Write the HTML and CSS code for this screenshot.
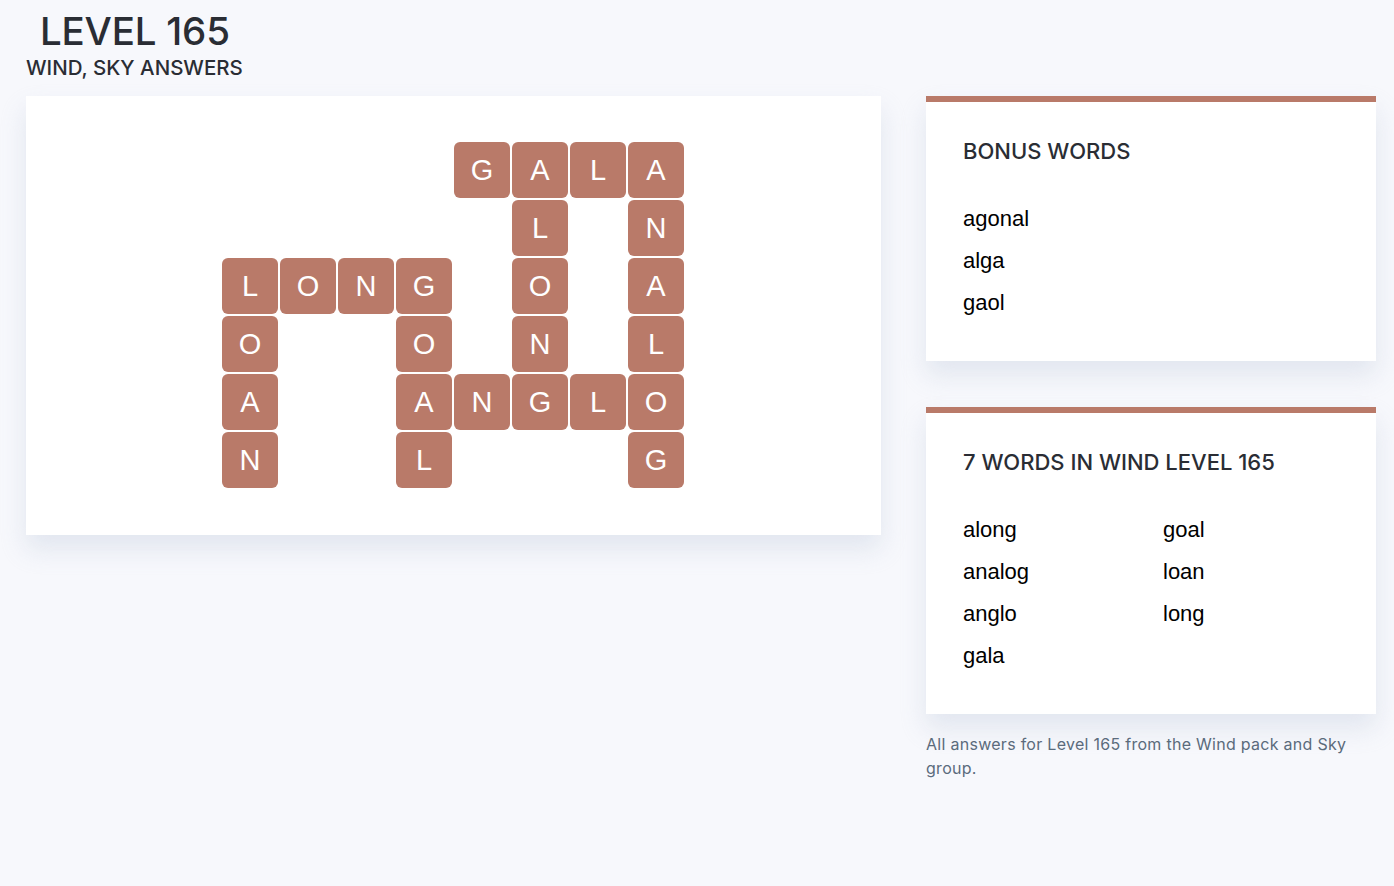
FILE: index.html
```html
<!DOCTYPE html>
<html lang="en">
<head>
<meta charset="utf-8">
<title>Level 165 - Wind, Sky Answers</title>
<link rel="stylesheet" href="styles.css">
</head>
<body>
<header class="page-head">
  <h1 class="title">LEVEL 165</h1>
  <h2 class="subtitle">WIND, SKY ANSWERS</h2>
</header>
<main class="layout">
  <section class="board-card">
    <div class="board">
      <span class="cell"></span><span class="cell"></span><span class="cell"></span><span class="cell"></span><span class="tile">G</span><span class="tile">A</span><span class="tile">L</span><span class="tile">A</span>
      <span class="cell"></span><span class="cell"></span><span class="cell"></span><span class="cell"></span><span class="cell"></span><span class="tile">L</span><span class="cell"></span><span class="tile">N</span>
      <span class="tile">L</span><span class="tile">O</span><span class="tile">N</span><span class="tile">G</span><span class="cell"></span><span class="tile">O</span><span class="cell"></span><span class="tile">A</span>
      <span class="tile">O</span><span class="cell"></span><span class="cell"></span><span class="tile">O</span><span class="cell"></span><span class="tile">N</span><span class="cell"></span><span class="tile">L</span>
      <span class="tile">A</span><span class="cell"></span><span class="cell"></span><span class="tile">A</span><span class="tile">N</span><span class="tile">G</span><span class="tile">L</span><span class="tile">O</span>
      <span class="tile">N</span><span class="cell"></span><span class="cell"></span><span class="tile">L</span><span class="cell"></span><span class="cell"></span><span class="cell"></span><span class="tile">G</span>
    </div>
  </section>
  <aside class="side">
    <section class="word-card">
      <h3 class="card-title">BONUS WORDS</h3>
      <ul class="word-list">
        <li>agonal</li>
        <li>alga</li>
        <li>gaol</li>
      </ul>
    </section>
    <section class="word-card">
      <h3 class="card-title">7 WORDS IN WIND LEVEL 165</h3>
      <ul class="word-list two-col">
        <li>along</li>
        <li>analog</li>
        <li>anglo</li>
        <li>gala</li>
        <li>goal</li>
        <li>loan</li>
        <li>long</li>
      </ul>
    </section>
    <p class="note">All answers for Level 165 from the Wind pack and Sky group.</p>
  </aside>
</main>
</body>
</html>
```
FILE: styles.css
```css
* { box-sizing: border-box; }

body {
  margin: 0;
  background: #f7f8fc;
  font-family: "Inter", "Liberation Sans", sans-serif;
  color: #2a2d34;
}

.page-head {
  padding: 9px 0 0 26px;
}

.title {
  margin: 0 0 0 14px;
  font-size: 38.5px;
  line-height: 44px;
  font-weight: 500;
  letter-spacing: -0.2px;
}

.subtitle {
  margin: 2px 0 0;
  font-size: 20.5px;
  line-height: 26px;
  font-weight: 500;
}

.layout {
  display: grid;
  grid-template-columns: 855px 450px;
  gap: 45px;
  padding: 15px 0 0 26px;
  align-items: start;
}

.board-card {
  background: #fff;
  height: 439px;
  padding: 46px 0 0 196px;
  box-shadow: 0 14px 24px rgba(200, 208, 224, 0.45);
}

.board {
  display: grid;
  grid-template-columns: repeat(8, 56px);
  grid-auto-rows: 56px;
  gap: 2px;
}

.tile {
  background: #b97a69;
  border-radius: 6px;
  color: #fff;
  font-family: "Liberation Sans", Arial, sans-serif;
  font-size: 29px;
  display: flex;
  align-items: center;
  justify-content: center;
}

.side {
  display: flex;
  flex-direction: column;
}

.word-card {
  background: #fff;
  border-top: 6px solid #b97a69;
  padding: 36px 37px 37px;
  margin-bottom: 46px;
  box-shadow: 0 14px 24px rgba(200, 208, 224, 0.45);
}

.word-card + .word-card {
  margin-bottom: 18px;
}

.card-title {
  margin: 0 0 34px;
  font-size: 22px;
  line-height: 26px;
  font-weight: 500;
  letter-spacing: 0;
}

.word-list {
  list-style: none;
  margin: 0;
  padding: 0;
  font-family: "Liberation Sans", Arial, sans-serif;
  font-size: 22px;
  line-height: 42px;
  color: #000;
}

.two-col {
  display: grid;
  grid-template-columns: 200px 1fr;
  grid-template-rows: repeat(4, 42px);
  grid-auto-flow: column;
}

.note {
  margin: 0;
  font-size: 16px;
  line-height: 24px;
  letter-spacing: 0.28px;
  color: #5b6b7c;
}
```
